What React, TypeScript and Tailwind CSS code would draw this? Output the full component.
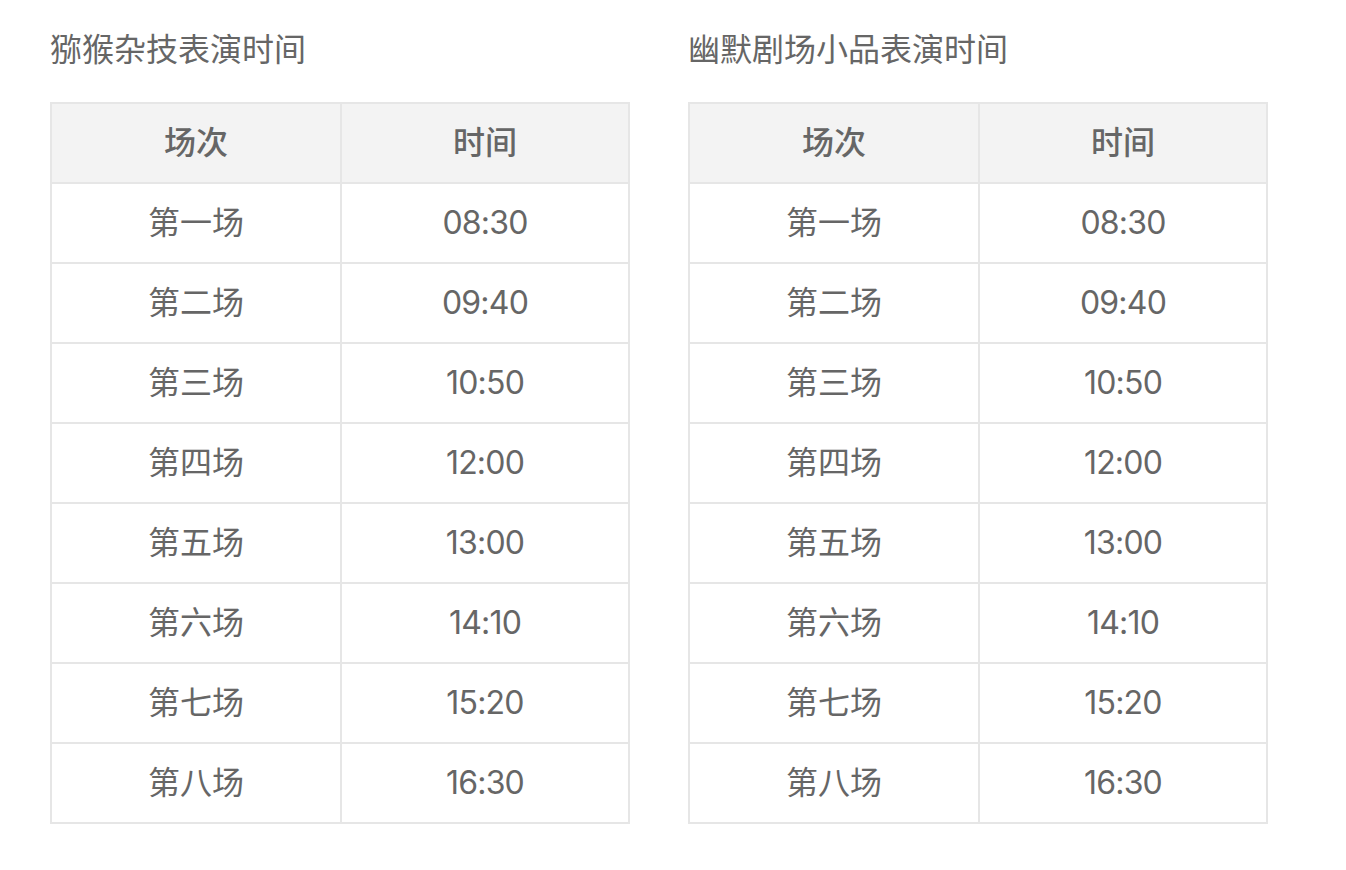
import React from "react";

const times = ["08:30", "09:40", "10:50", "12:00", "13:00", "14:10", "15:20", "16:30"];
const labels = ["第一场", "第二场", "第三场", "第四场", "第五场", "第六场", "第七场", "第八场"];

function Schedule({ title }: { title: string }) {
  return (
    <div className="w-[580px]">
      <h2 className="text-[32px] leading-[32px] text-[#666666]">{title}</h2>
      <div className="mt-[36px] border-t-2 border-l-2 border-[#e6e6e6]">
        <div className="flex bg-[#f3f3f3] font-medium">
          <div className="w-[290px] h-[80px] flex items-center justify-center border-r-2 border-b-2 border-[#e6e6e6]">
            场次
          </div>
          <div className="w-[288px] h-[80px] flex items-center justify-center border-r-2 border-b-2 border-[#e6e6e6]">
            时间
          </div>
        </div>
        {labels.map((label, i) => (
          <div key={label} className="flex">
            <div className="w-[290px] h-[80px] flex items-center justify-center border-r-2 border-b-2 border-[#e6e6e6]">
              {label}
            </div>
            <div className="w-[288px] h-[80px] flex items-center justify-center border-r-2 border-b-2 border-[#e6e6e6] tracking-[-0.8px]">
              {times[i]}
            </div>
          </div>
        ))}
      </div>
    </div>
  );
}

export default function App() {
  return (
    <div
      className="min-h-screen bg-white pt-[34px] pl-[50px] flex gap-[58px] text-[32px] text-[#666666]"
      style={{ fontFamily: 'Inter, "Noto Sans CJK SC", sans-serif' }}
    >
      <Schedule title="猕猴杂技表演时间" />
      <Schedule title="幽默剧场小品表演时间" />
    </div>
  );
}
